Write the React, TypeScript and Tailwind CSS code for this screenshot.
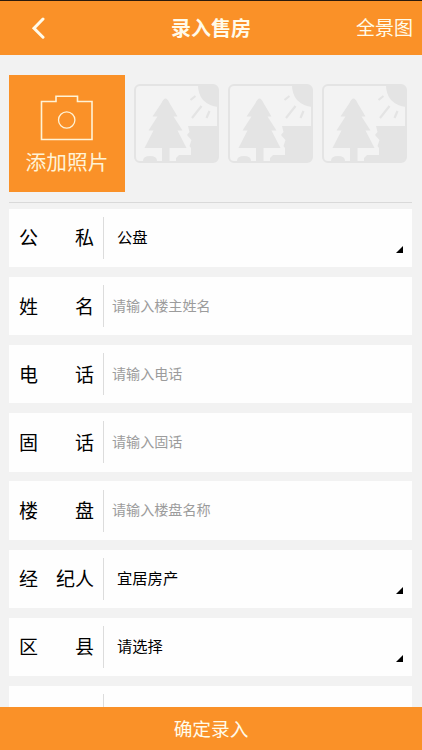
import React from "react";

type Field = {
  label: string[];
  value?: string;
  placeholder?: string;
};

const fields: Field[] = [
  { label: ["公", "私"], value: "公盘" },
  { label: ["姓", "名"], placeholder: "请输入楼主姓名" },
  { label: ["电", "话"], placeholder: "请输入电话" },
  { label: ["固", "话"], placeholder: "请输入固话" },
  { label: ["楼", "盘"], placeholder: "请输入楼盘名称" },
  { label: ["经", "纪人"], value: "宜居房产" },
  { label: ["区", "县"], value: "请选择" },
  { label: [] },
];

function CameraIcon() {
  return (
    <svg width="54" height="46" viewBox="0 0 54 46" fill="none" stroke="#fff3d6" strokeWidth="1.6">
      <path d="M1.5 6.5H16V1.2H37.5V6.5H52V44.5H1.5Z" />
      <circle cx="26.7" cy="25" r="8.2" strokeWidth="1.3" />
    </svg>
  );
}

function PhotoPlaceholder() {
  return (
    <svg width="85" height="79" viewBox="0 0 85 79" fill="#e4e4e4" className="shrink-0">
      <rect x="1" y="1" width="83" height="77" rx="5" fill="#f3f3f3" stroke="#e4e4e4" strokeWidth="2" />
      {/* Sun and rays */}
      <path d="M64 1H79Q84 1 84 6V23Q75 22 69 16Q64 10 64 1Z" />
      <path d="M56.5 16L61.5 12M58 34L67.5 22M72.5 34L75.5 27" stroke="#e4e4e4" strokeWidth="2.2" />
      {/* Hill */}
      <path d="M54 42H84V73Q84 78 79 78H42V74L45 71H57V64L55.5 62L57.5 56L53 51L55.5 48Z" />
      {/* Tree */}
      <path d="M31.5 14.5Q33.5 14.5 35.5 19L43.5 32.5H39.5L48.5 46.5H43.5L52.5 64H35.5V77H28V64H10.5L19.5 46.5H14.5L23.5 32.5H18.5L27.5 19Q29.5 14.5 31.5 14.5Z" />
      <path d="M9 77Q9 72 16 72Q23 72 23 77Z" />
    </svg>
  );
}

function FieldRow({ label, value, placeholder }: Field) {
  return (
    <div className="flex h-[58.4px] shrink-0 items-center bg-[#fefefe] pl-[10px] pr-[9px]">
      <div className="mb-px flex w-[75px] justify-between text-[19px] leading-[28px] text-black">
        {label.map((part) => (
          <span key={part}>{part}</span>
        ))}
      </div>
      <div className="ml-[9px] h-[42px] w-px bg-[#dcdcdc]" />
      {value && (
        <>
          <span className="mb-[3px] ml-[13px] flex-1 text-[15.3px] text-black">{value}</span>
          <svg width="7" height="7" viewBox="0 0 7 7" className="mb-[14px] self-end">
            <path d="M7 0V7H0Z" fill="#000" />
          </svg>
        </>
      )}
      {placeholder && (
        <span className="mb-px ml-2 text-[14.1px] text-[#9c9c9c]">{placeholder}</span>
      )}
    </div>
  );
}

export default function App() {
  return (
    <div className="flex h-[750px] w-[422px] flex-col overflow-hidden bg-[#f2f2f2] font-['Noto_Sans_CJK_SC','Noto_Sans',sans-serif]">
      <header className="flex h-[55px] shrink-0 items-center border-t border-[#2b1a0c] bg-[#fa9128] pl-[31px] pr-[9px] text-[#fffbea]">
        <div className="flex-1">
          <svg width="14" height="22" viewBox="0 0 14 22" fill="none" stroke="currentColor" strokeWidth="3" strokeLinecap="round">
            <path d="M12 2L3 11.2L12 20.2" />
          </svg>
        </div>
        <h1 className="-ml-[22px] text-[20px] font-bold">录入售房</h1>
        <span className="flex-1 pb-px text-right text-[19px]">全景图</span>
      </header>

      <main className="flex min-h-0 flex-1 flex-col overflow-hidden pl-[9px] pr-[10px]">
        <section className="flex h-[148px] shrink-0 border-b border-[#d9d9d9] pt-5">
          <button className="flex h-[117px] w-[116px] shrink-0 flex-col items-center bg-[#fa9128] pt-5 text-[#fff3d6]">
            <CameraIcon />
            <span className="mt-[5px] text-[20.7px] leading-[30px]">添加照片</span>
          </button>
          <div className="ml-[9px] mt-[9px] flex gap-[9px]">
            <PhotoPlaceholder />
            <PhotoPlaceholder />
            <PhotoPlaceholder />
          </div>
        </section>

        <div className="mt-[5.8px] flex flex-col gap-[9.75px]">
          {fields.map((field, i) => (
            <FieldRow key={i} {...field} />
          ))}
        </div>
      </main>

      <footer className="flex h-[43px] shrink-0 items-center justify-center bg-[#fa9128] pb-px text-[18.7px] text-[#fffbea]">
        确定录入
      </footer>
    </div>
  );
}
